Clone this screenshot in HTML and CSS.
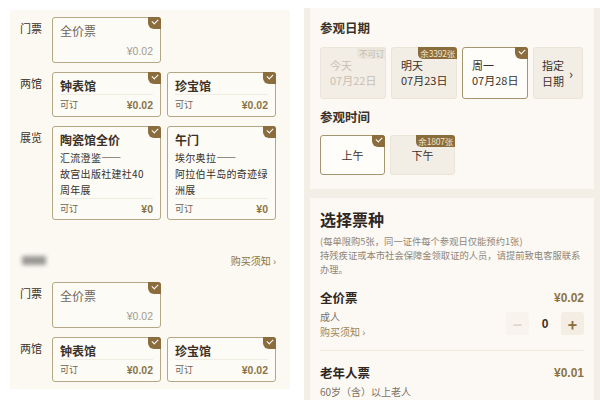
FILE: index.html
```html
<!DOCTYPE html>
<html lang="zh-CN">
<head>
    <meta charset="UTF-8">
    <title>购票</title>
    <link rel="stylesheet" href="styles.css">
</head>
<body>
    <div class="page">
        <!-- left screen: ticket choices -->
        <section class="left">
            <div class="group">
                <div class="row">
                    <div class="label">门票</div>
                    <div class="cards">
                        <div class="card single">
                            <div class="title">全价票</div>
                            <div class="foot"><span></span><span class="price light">¥0.02</span></div>
                            <span class="check"></span>
                        </div>
                    </div>
                </div>
                <div class="row">
                    <div class="label">两馆</div>
                    <div class="cards">
                        <div class="card">
                            <div class="title">钟表馆</div>
                            <div class="foot"><span>可订</span><span class="price">¥0.02</span></div>
                            <span class="check"></span>
                        </div>
                        <div class="card">
                            <div class="title">珍宝馆</div>
                            <div class="foot"><span>可订</span><span class="price">¥0.02</span></div>
                            <span class="check"></span>
                        </div>
                    </div>
                </div>
                <div class="row">
                    <div class="label">展览</div>
                    <div class="cards">
                        <div class="card tall">
                            <div class="title">陶瓷馆全价</div>
                            <div class="desc">汇流澄鉴——<br>故宫出版社建社40<br>周年展</div>
                            <div class="foot"><span>可订</span><span class="price">¥0</span></div>
                            <span class="check"></span>
                        </div>
                        <div class="card tall">
                            <div class="title">午门</div>
                            <div class="desc">埃尔奥拉——<br>阿拉伯半岛的奇迹绿<br>洲展</div>
                            <div class="foot"><span>可订</span><span class="price">¥0</span></div>
                            <span class="check"></span>
                        </div>
                    </div>
                </div>
            </div>

            <div class="group second">
                <div class="notice-row">
                    <span class="blur"></span>
                    <span class="notice">购买须知 ›</span>
                </div>
                <div class="row">
                    <div class="label">门票</div>
                    <div class="cards">
                        <div class="card single">
                            <div class="title">全价票</div>
                            <div class="foot"><span></span><span class="price light">¥0.02</span></div>
                            <span class="check"></span>
                        </div>
                    </div>
                </div>
                <div class="row">
                    <div class="label">两馆</div>
                    <div class="cards">
                        <div class="card">
                            <div class="title">钟表馆</div>
                            <div class="foot"><span>可订</span><span class="price">¥0.02</span></div>
                            <span class="check"></span>
                        </div>
                        <div class="card">
                            <div class="title">珍宝馆</div>
                            <div class="foot"><span>可订</span><span class="price">¥0.02</span></div>
                            <span class="check"></span>
                        </div>
                    </div>
                </div>
            </div>
        </section>

        <!-- right screen: date / time / ticket type -->
        <section class="right">
            <div class="panel">
                <h3>参观日期</h3>
                <div class="options">
                    <div class="opt disabled">
                        <span>今天</span><span>07月22日</span>
                        <span class="tag grey">不可订</span>
                    </div>
                    <div class="opt">
                        <span>明天</span><span>07月23日</span>
                        <span class="tag">余3392张</span>
                    </div>
                    <div class="opt active">
                        <span>周一</span><span>07月28日</span>
                        <span class="check"></span>
                    </div>
                    <div class="opt pick">
                        <div class="pick-text"><span>指定</span><span>日期</span></div>
                        <span class="arrow">›</span>
                    </div>
                </div>

                <h3 class="time-title">参观时间</h3>
                <div class="options">
                    <div class="opt slot active">
                        <span>上午</span>
                        <span class="check"></span>
                    </div>
                    <div class="opt slot">
                        <span>下午</span>
                        <span class="tag">余1807张</span>
                    </div>
                </div>
            </div>

            <div class="panel types">
                <h2>选择票种</h2>
                <p class="hint">(每单限购5张，同一证件每个参观日仅能预约1张)<br>持残疾证或本市社会保障金领取证的人员，请提前致电客服联系办理。</p>

                <div class="ticket">
                    <div class="ticket-head">
                        <span class="ticket-name">全价票</span>
                        <span class="ticket-price">¥0.02</span>
                    </div>
                    <div class="ticket-body">
                        <div>
                            <div class="who">成人</div>
                            <div class="rules">购买须知 ›</div>
                        </div>
                        <div class="stepper">
                            <span class="btn off">−</span>
                            <span class="count">0</span>
                            <span class="btn">+</span>
                        </div>
                    </div>
                </div>

                <div class="ticket">
                    <div class="ticket-head">
                        <span class="ticket-name">老年人票</span>
                        <span class="ticket-price">¥0.01</span>
                    </div>
                    <div class="who">60岁（含）以上老人</div>
                </div>
            </div>
        </section>
    </div>
</body>
</html>
```

FILE: styles.css
```css
body {
    margin: 0;
    background: #ffffff;
    font-family: "Noto Sans CJK SC", "Noto Sans", sans-serif;
    color: #3b3128;
}

.page {
    display: flex;
    width: 600px;
    height: 400px;
    overflow: hidden;
}

/* left screen */
.left {
    width: 280px;
    height: 379px;
    margin: 10px 0 0 10px;
    background: #fcf9f3;
    display: flex;
    flex-direction: column;
}

.group {
    padding: 7px 12px 0 10px;
    display: flex;
    flex-direction: column;
    gap: 9px;
}

.group.second {
    margin-top: 24px;
}

.row {
    display: flex;
}

.label {
    width: 32px;
    font-size: 11px;
    line-height: 14px;
    padding-top: 4px;
    color: #3b3128;
}

.cards {
    display: flex;
    gap: 6px;
}

.card {
    position: relative;
    width: 109px;
    height: 45px;
    border: 1px solid #b3a785;
    border-radius: 3px;
    background: #fdfbf6;
    padding: 0 7px;
    box-sizing: border-box;
    display: flex;
    flex-direction: column;
}

.card.single {
    height: 46px;
}

.card.tall {
    height: 94px;
}

.card .title {
    font-size: 12px;
    font-weight: 700;
    line-height: 15px;
    padding-top: 5px;
    color: #3b3128;
}

.card.single .title {
    color: #6f665c;
    font-weight: 400;
}

.card .desc {
    font-size: 10px;
    line-height: 16px;
    margin-top: 3px;
    color: #3b3128;
    letter-spacing: 0.3px;
    white-space: nowrap;
}

.card .foot {
    margin-top: auto;
    display: flex;
    justify-content: space-between;
    align-items: center;
    font-size: 9px;
    color: #6e6252;
    line-height: 12px;
    padding: 4px 0 5px;
    border-top: 1px solid #f1ece2;
}

.card.single .foot {
    border-top: none;
}

.price {
    font-family: "Liberation Sans", sans-serif;
    font-size: 10.5px;
    font-weight: 700;
    color: #8a7446;
}

.price.light {
    font-weight: 400;
    color: #a39a8a;
}

.check {
    position: absolute;
    top: -1px;
    right: -1px;
    width: 13px;
    height: 12px;
    background: #8b6c3c;
    border-radius: 0 3px 0 6px;
}

.check::after {
    content: "";
    position: absolute;
    left: 4px;
    top: 2px;
    width: 5px;
    height: 3px;
    border-left: 1.5px solid #fff;
    border-bottom: 1.5px solid #fff;
    transform: rotate(-45deg);
}

.notice-row {
    display: flex;
    justify-content: space-between;
    align-items: center;
    height: 18px;
    margin-bottom: 4px;
}

.blur {
    width: 24px;
    height: 9px;
    margin-left: 2px;
    background: #9a9894;
    filter: blur(2px);
}

.notice {
    font-size: 10px;
    color: #8a7446;
    margin-right: 2px;
}

/* right screen */
.right {
    width: 284px;
    margin: 8px 0 0 14px;
    padding: 0 6px;
    background: #f4efe6;
    display: flex;
    flex-direction: column;
    gap: 9px;
}

.panel {
    background: #fcf9f4;
    padding: 12px 10px 14px 10px;
}

.panel h3 {
    margin: 0 0 11px;
    font-size: 12.5px;
    font-weight: 700;
    line-height: 16px;
    color: #3b3128;
}

.panel h3.time-title {
    margin-top: 10px;
    margin-bottom: 10px;
}

.options {
    display: flex;
    gap: 5px;
}

.opt {
    position: relative;
    width: 66px;
    height: 52px;
    box-sizing: border-box;
    background: #f2ede5;
    border: 1px solid #ebe4d8;
    border-radius: 3px;
    padding: 10px 0 0 9px;
    display: flex;
    flex-direction: column;
    font-size: 11px;
    line-height: 15px;
    color: #3b3128;
}

.opt.disabled {
    color: #c8bfb2;
}

.opt.active {
    background: #fffdf9;
    border: 1px solid #a39570;
}

.opt.pick {
    width: 50px;
    flex-direction: row;
    align-items: center;
    padding: 0 0 0 8px;
    justify-content: space-between;
}

.pick-text {
    display: flex;
    flex-direction: column;
    line-height: 16px;
}

.arrow {
    font-size: 13px;
    margin-right: 9px;
}

.opt.slot {
    width: 65px;
    height: 40px;
    padding: 0;
    align-items: center;
    justify-content: center;
}

.tag {
    position: absolute;
    top: -1px;
    right: -1px;
    background: #8b6c3c;
    color: #f4e6c8;
    font-size: 8.5px;
    line-height: 12px;
    padding: 0 2px;
    border-radius: 0 3px 0 5px;
    letter-spacing: -0.2px;
}

.tag.grey {
    background: #ebe5db;
    color: #c4bbad;
}

.types {
    flex: 1;
    padding-top: 11px;
}

.types h2 {
    margin: 0 0 5px;
    font-size: 16px;
    font-weight: 700;
    line-height: 20px;
    color: #2f261e;
}

.hint {
    margin: 0 0 12px;
    font-size: 9.3px;
    line-height: 14px;
    color: #8e8578;
}

.ticket {
    padding-bottom: 10px;
    border-bottom: 1px solid #efe9df;
    margin-bottom: 12px;
}

.ticket-head {
    display: flex;
    justify-content: space-between;
    align-items: center;
}

.ticket-name {
    font-size: 12.5px;
    font-weight: 700;
    color: #2f261e;
}

.ticket-price {
    font-family: "Liberation Sans", sans-serif;
    font-size: 12px;
    font-weight: 700;
    color: #8a7446;
}

.ticket-body {
    display: flex;
    justify-content: space-between;
    align-items: center;
}

.who {
    font-size: 10px;
    line-height: 14px;
    margin-top: 3px;
    color: #7a7165;
}

.rules {
    font-size: 10px;
    line-height: 16px;
    color: #9a8655;
}

.stepper {
    display: flex;
    align-items: center;
}

.btn {
    width: 23px;
    height: 23px;
    display: flex;
    align-items: center;
    justify-content: center;
    background: #f3ede3;
    border-radius: 3px;
    color: #8b6c3c;
    font-size: 16px;
    font-weight: 700;
}

.btn.off {
    color: #e0d8cb;
    background: #f8f3ec;
}

.count {
    width: 32px;
    text-align: center;
    font-family: "Liberation Sans", sans-serif;
    font-size: 12px;
    font-weight: 700;
}
```
